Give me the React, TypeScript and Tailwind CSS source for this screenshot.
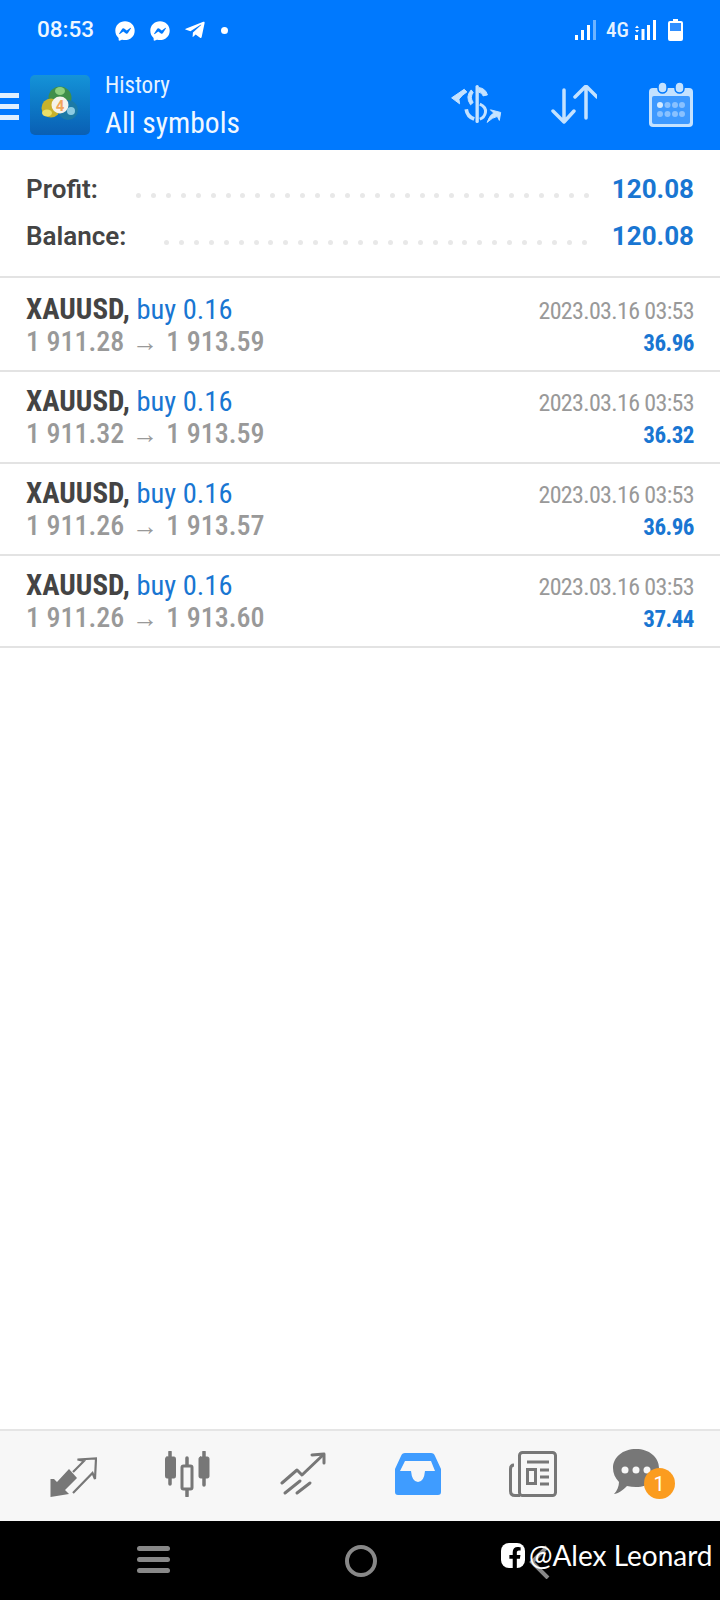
import { FaFacebookF, FaFacebookMessenger, FaTelegramPlane } from 'react-icons/fa';

const trades = [
  { open: '1 911.28', close: '1 913.59', profit: '36.96', first: true },
  { open: '1 911.32', close: '1 913.59', profit: '36.32' },
  { open: '1 911.26', close: '1 913.57', profit: '36.96' },
  { open: '1 911.26', close: '1 913.60', profit: '37.44' },
];

function Dots({ count }: { count: number }) {
  return (
    <div className="flex-1 flex justify-between items-center mt-[11px]">
      {Array.from({ length: count }).map((_, i) => (
        <div key={i} className="w-[5px] h-[5px] rounded-full bg-[#e8e8e8]" />
      ))}
    </div>
  );
}

function StatusBar() {
  return (
    <div className="h-[60px] pl-[37px] pr-[37px] flex items-center text-white">
      <span className="text-[22.5px] font-medium w-[78px] text-[#eef7ff]">08:53</span>
      <FaFacebookMessenger className="w-[20px] h-[20px] mt-[1px]" />
      <FaFacebookMessenger className="w-[20px] h-[20px] mt-[1px] ml-[15px]" />
      <FaTelegramPlane className="w-[22px] h-[22px] ml-[14px]" />
      <div className="w-[7px] h-[7px] rounded-full bg-white ml-[15px]" />
      <div className="flex-1" />
      <svg width="22" height="20" viewBox="0 0 22 20" className="mr-[9px]">
        <rect x="0" y="15" width="3" height="5" fill="#fff" />
        <rect x="6" y="10" width="3" height="10" fill="#fff" />
        <rect x="12" y="5" width="3" height="15" fill="#fff" />
        <rect x="18" y="0" width="3" height="20" fill="#6db3ff" />
      </svg>
      <span className="text-[21px] leading-none font-medium text-[#e4f2ff] [font-stretch:75%] w-[28px]">4G</span>
      <svg width="22" height="20" viewBox="0 0 22 20" className="mr-[12px]">
        <path d="M1 8 L3 5.5 L5 8 Z M1 10 L3 12.5 L5 10 Z" fill="#fff" />
        <rect x="1" y="15" width="3" height="5" fill="#fff" />
        <rect x="7.5" y="9" width="3" height="11" fill="#fff" />
        <rect x="13" y="5" width="3" height="15" fill="#fff" />
        <rect x="19" y="0" width="3" height="20" fill="#fff" />
      </svg>
      <svg width="15" height="22" viewBox="0 0 15 22">
        <path d="M5 0 H10 V2 H13 Q15 2 15 4 V20 Q15 22 13 22 H2 Q0 22 0 20 V4 Q0 2 2 2 H5 Z" fill="#fff" />
        <rect x="2" y="4" width="11" height="8" fill="#2f8fff" />
      </svg>
    </div>
  );
}

function Logo() {
  return (
    <div className="w-[60px] h-[60px] rounded-[5px] bg-gradient-to-b from-[#1593d8] to-[#0a5fb4]">
      <svg width="60" height="60" viewBox="30 75 60 60">
        <circle cx="60" cy="98" r="11.5" fill="#3f8f4a" />
        <ellipse cx="60" cy="91" rx="5" ry="4" fill="#8ccf80" />
        <circle cx="51" cy="108" r="9.5" fill="#c8b22c" />
        <ellipse cx="47" cy="113" rx="5" ry="3.5" fill="#eadf6a" />
        <circle cx="68" cy="110" r="10" fill="#1c7aa6" />
        <circle cx="71" cy="111" r="4" fill="#8ccbe3" />
        <circle cx="60" cy="105" r="8.5" fill="#f5f3ec" />
        <text x="60" y="110.5" textAnchor="middle" fontSize="15" fontWeight="700" fill="#f2a65a" fontFamily="Roboto, sans-serif">4</text>
      </svg>
    </div>
  );
}

function Toolbar() {
  return (
    <div className="h-[90px] flex items-start relative">
      <div className="w-[19px] mt-[33px] flex flex-col gap-[6px]">
        <div className="h-[5px] bg-[#dff0ff]" />
        <div className="h-[5px] bg-[#dff0ff]" />
        <div className="h-[5px] bg-[#dff0ff]" />
      </div>
      <div className="ml-[11px] mt-[15px]">
        <Logo />
      </div>
      <div className="ml-[15px] flex flex-col text-[#e6f3ff] [font-stretch:75%] leading-none">
        <span className="text-[23px] mt-[14px] h-[31px]">History</span>
        <span className="text-[29.5px] leading-[37px] text-[#f0f8ff]">All symbols</span>
      </div>
      <div className="flex-1" />
      {/* swap-dollar */}
      <svg width="53" height="42" viewBox="30 40 160 125" className="mt-[23px] mr-[51px]" fill="#c4e2ff" stroke="#c4e2ff" strokeWidth="3">
        <path d="M115 50 V155" strokeWidth="10" strokeLinecap="round" />
        <path d="M120 53 Q140 55 146 75 L133 78 Q130 68 120 67 Z" />
        <path d="M97 60 Q78 80 95 105 L103 98 Q92 82 103 68 Z" />
        <path d="M123 103 Q143 112 140 128 Q137 143 123 148" fill="none" strokeWidth="9" />
        <path d="M82 118 Q85 140 106 148" fill="none" strokeWidth="11" />
        <path d="M76 58 L38 84 L62 102 L60 88 Q68 76 84 66 Z" />
        <path d="M145 158 Q153 135 165 130 L155 120 L186 128 L182 152 L176 140 Q162 142 145 158 Z" />
      </svg>
      {/* sort */}
      <svg width="46" height="40" viewBox="0 0 46 40" className="mt-[25px] mr-[52px] ml-[-2px]" fill="none" stroke="#c4e2ff" strokeWidth="3.5" strokeLinecap="round" strokeLinejoin="round">
        <path d="M13 5 V37 M2 26 L13 37 L23 26" />
        <path d="M35 1 V33 M24 12 L35 1 L46 12" />
      </svg>
      {/* calendar */}
      <svg width="44" height="46" viewBox="0 0 44 46" className="mt-[21px] mr-[27px]">
        <rect x="0" y="7" width="44" height="39" rx="4" fill="#c4e2ff" />
        <rect x="9" y="1" width="9" height="11" rx="4.5" fill="#c4e2ff" stroke="#0079fe" strokeWidth="1.5" />
        <rect x="26" y="1" width="9" height="11" rx="4.5" fill="#c4e2ff" stroke="#0079fe" strokeWidth="1.5" />
        <rect x="3" y="15" width="38" height="28" rx="2" fill="#3d99ff" />
        <circle cx="11" cy="24" r="3" fill="#d6ebff" />
        <circle cx="18.5" cy="24" r="3" fill="#89c1ff" />
        <circle cx="26" cy="24" r="3" fill="#89c1ff" />
        <circle cx="33" cy="24" r="3" fill="#89c1ff" />
        <circle cx="11" cy="33" r="3" fill="#89c1ff" />
        <circle cx="18.5" cy="33" r="3" fill="#89c1ff" />
        <circle cx="26" cy="33" r="3" fill="#89c1ff" />
        <circle cx="33" cy="33" r="3" fill="#89c1ff" />
      </svg>
    </div>
  );
}

function Summary() {
  return (
    <div className="h-[128px] pt-[21px] pl-[26px] pr-[26px] border-b-2 border-[#e3e3e3]">
      <div className="h-[37px] flex items-center text-[26px] font-semibold">
        <span className="text-[#444] w-[110px]">Profit:</span>
        <Dots count={31} />
        <span className="text-[#1976d2] font-bold w-[105px] text-right">120.08</span>
      </div>
      <div className="h-[37px] mt-[10px] flex items-center text-[26px] font-semibold">
        <span className="text-[#444] w-[138px]">Balance:</span>
        <Dots count={29} />
        <span className="text-[#1976d2] font-bold w-[107px] text-right">120.08</span>
      </div>
    </div>
  );
}

function TradeRow({ open, close, profit, first }: { open: string; close: string; profit: string; first?: boolean }) {
  return (
    <div className={`${first ? 'h-[94px] pt-[15px]' : 'h-[92px] pt-[13px]'} pl-[26px] pr-[26px] border-b-2 border-[#e3e3e3] flex justify-between [font-stretch:75%]`}>
      <div className="flex flex-col">
        <div className="h-[33px] leading-[33px] text-[29px]">
          <span className="text-[#444] font-bold">XAUUSD,</span>{' '}
          <span className="text-[#1976d2] text-[28.5px]">buy 0.16</span>
        </div>
        <div className="h-[32px] leading-[32px] text-[28px] font-medium text-[#999] flex items-center">
          <span>{open}</span>
          <span className="mx-[8px] text-[26px] font-normal font-['Liberation_Sans']">→</span>
          <span>{close}</span>
        </div>
      </div>
      <div className="flex flex-col items-end">
        <div className="h-[33px] mt-[2px] leading-[33px] text-[24px] tracking-[-0.65px] text-[#999]">2023.03.16 03:53</div>
        <div className="h-[31px] leading-[31px] text-[23px] tracking-[-0.5px] font-bold text-[#1976d2]">{profit}</div>
      </div>
    </div>
  );
}

function TabBar() {
  return (
    <div className="h-[92px] bg-[#f7f7f7] border-t-2 border-[#e5e5e5] pl-[15px] grid grid-cols-[repeat(6,115px)] items-center pb-[4px]">
      <div className="flex justify-center">
        <svg width="48" height="42" viewBox="48 34 48 42" className="mt-[6px]">
          <path d="M49.5 57 V75 L68 72 L64 68 L76 56 L68 47 L56 60 L53 57 Z" fill="#777" />
          <path d="M72 50 L83 39 L76.5 37.5 L95 36.5 L94 57 L91.5 51 L72 71" fill="none" stroke="#777" strokeWidth="2.2" />
        </svg>
      </div>
      <div className="flex justify-center">
        <svg width="48" height="46" viewBox="0 0 48 46" className="mr-[2px]" stroke="#777" strokeLinecap="round">
          <path d="M7 1 V33 M24 7 V45 M41 1 V34" strokeWidth="3.5" />
          <rect x="2.5" y="6" width="10" height="21" rx="1.5" fill="#777" strokeWidth="1" />
          <rect x="19" y="15" width="10" height="23" rx="1.5" fill="#f7f7f7" strokeWidth="3" />
          <rect x="36" y="6" width="10" height="21" rx="1.5" fill="#777" strokeWidth="1" />
        </svg>
      </div>
      <div className="flex justify-center">
        <svg width="46" height="44" viewBox="0 0 46 44" fill="none" stroke="#777" strokeWidth="3" strokeLinecap="round" strokeLinejoin="round">
          <path d="M2 31 L17 18 L22 23 L43 3" />
          <path d="M32 3 L44 2 L44 11" />
          <path d="M5 41 L20 29 M17 41 L30 31" />
        </svg>
      </div>
      <div className="flex justify-center">
        <svg width="46" height="42" viewBox="0 0 46 42">
          <path d="M10 0 H36 Q39 0 40 3 L46 16 V39 Q46 42 43 42 H3 Q0 42 0 39 V16 L6 3 Q7 0 10 0 Z" fill="#3f9cff" />
          <path d="M10 8 H36 L40 18 H30 Q29 29 23 29 Q17 29 16 18 H5 Z" fill="#f7f7f7" />
        </svg>
      </div>
      <div className="flex justify-center">
        <svg width="48" height="46" viewBox="0 0 48 46" fill="none" stroke="#777">
          <rect x="10.5" y="1.5" width="36" height="43" rx="3" strokeWidth="3" />
          <path d="M5 14 Q1.5 14 1.5 18 V40 Q1.5 44.5 6 44.5 H11" strokeWidth="3" />
          <path d="M18 11 H40" strokeWidth="3" />
          <rect x="18.5" y="18.5" width="8" height="14" strokeWidth="3" />
          <path d="M31 19 H40 M31 26 H40 M31 33 H40" strokeWidth="3" />
        </svg>
      </div>
      <div className="flex justify-center">
        <div className="relative w-[62px] h-[50px] mr-[8px]">
          <svg width="46" height="46" viewBox="0 0 46 46">
            <path d="M23 0 C36 0 46 8 46 19 C46 30 36 38 23 38 C20 38 17 37.5 14 37 C10 41 5 45 1 45 C4 42 6 37 6 33 C2 29 0 24 0 19 C0 8 10 0 23 0 Z" fill="#777" />
            <circle cx="12" cy="21" r="3.5" fill="#f7f7f7" />
            <circle cx="23" cy="21" r="3.5" fill="#f7f7f7" />
            <circle cx="34" cy="21" r="3.5" fill="#f7f7f7" />
          </svg>
          <div className="absolute right-0 top-[19px] w-[31px] h-[31px] rounded-full bg-[#fb9c1f] text-white text-[20px] flex items-center justify-center">1</div>
        </div>
      </div>
    </div>
  );
}

function NavBar() {
  return (
    <div className="flex-1 bg-black relative flex items-center">
      <div className="ml-[137px] mt-[-2px] w-[33px] flex flex-col gap-[6px]">
        <div className="h-[5px] rounded-full bg-[#888]" />
        <div className="h-[5px] rounded-full bg-[#888]" />
        <div className="h-[5px] rounded-full bg-[#888]" />
      </div>
      <div className="ml-[175px] w-[32px] h-[32px] rounded-full border-[4px] border-[#888]" />
      <svg width="22" height="34" viewBox="0 0 22 34" className="ml-[152px] mt-[2px]" fill="none" stroke="#888" strokeWidth="4">
        <path d="M18 2 L3 17 L19 33" />
      </svg>
      {/* watermark over the nav buttons */}
      <div className="absolute left-[501px] top-[20px] flex items-center text-white">
        <div className="w-[24px] h-[25px] rounded-[8px] bg-white flex items-end justify-center overflow-hidden">
          <FaFacebookF className="w-[18px] h-[21px] text-black mr-[-4px]" />
        </div>
        <span className="ml-[4px] text-[28px] leading-none font-normal font-['Lato']">@Alex Leonard</span>
      </div>
    </div>
  );
}

export default function App() {
  return (
    <div className="w-[720px] h-[1600px] flex flex-col bg-white overflow-hidden font-['Roboto',sans-serif]">
      <div className="h-[150px] bg-[#0079fe]">
        <StatusBar />
        <Toolbar />
      </div>
      <Summary />
      {trades.map((t) => (
        <TradeRow key={t.open + t.close} {...t} />
      ))}
      <div className="flex-1" />
      <TabBar />
      <div className="h-[79px] flex">
        <NavBar />
      </div>
    </div>
  );
}
